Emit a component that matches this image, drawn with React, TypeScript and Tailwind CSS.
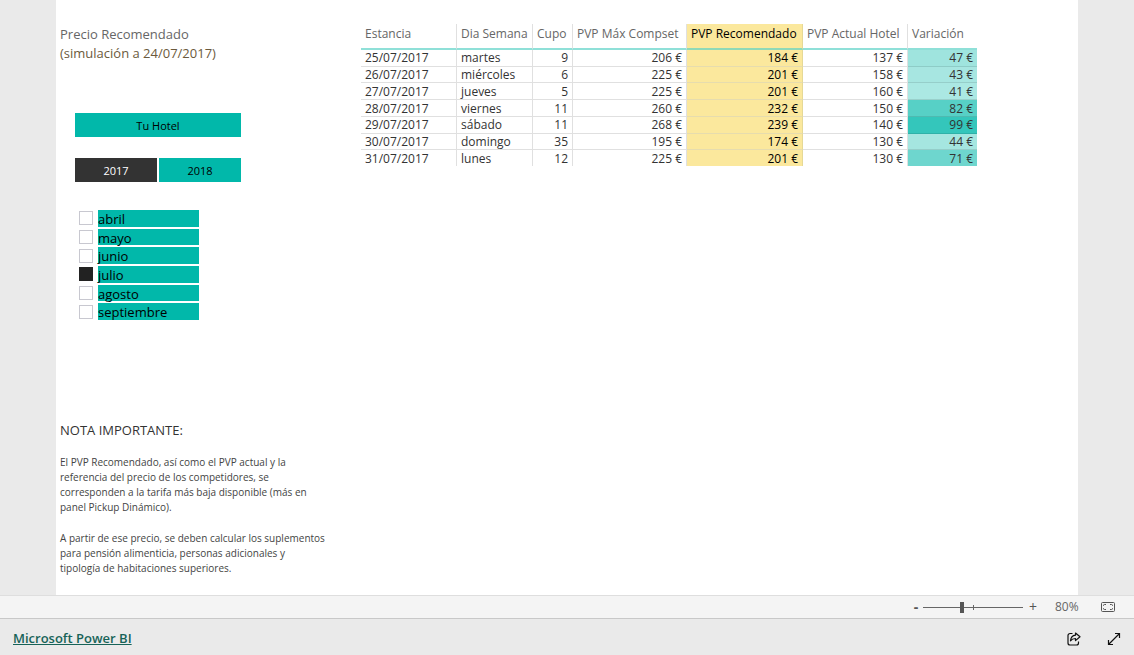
import { useState } from "react";

type Row = {
  date: string;
  day: string;
  quota: number;
  max: number;
  recommended: number;
  current: number;
  diff: number;
  tone: string;
};

const rows: Row[] = [
  { date: "25/07/2017", day: "martes", quota: 9, max: 206, recommended: 184, current: 137, diff: 47, tone: "bg-[#9fe4de]" },
  { date: "26/07/2017", day: "miércoles", quota: 6, max: 225, recommended: 201, current: 158, diff: 43, tone: "bg-[#a7e6e1]" },
  { date: "27/07/2017", day: "jueves", quota: 5, max: 225, recommended: 201, current: 160, diff: 41, tone: "bg-[#abe8e3]" },
  { date: "28/07/2017", day: "viernes", quota: 11, max: 260, recommended: 232, current: 150, diff: 82, tone: "bg-[#57d0c6]" },
  { date: "29/07/2017", day: "sábado", quota: 11, max: 268, recommended: 239, current: 140, diff: 99, tone: "bg-[#34c6bb]" },
  { date: "30/07/2017", day: "domingo", quota: 35, max: 195, recommended: 174, current: 130, diff: 44, tone: "bg-[#a5e6e0]" },
  { date: "31/07/2017", day: "lunes", quota: 12, max: 225, recommended: 201, current: 130, diff: 71, tone: "bg-[#6ed6ce]" },
];

const months = ["abril", "mayo", "junio", "julio", "agosto", "septiembre"];
const years = ["2017", "2018"];

function PriceTable() {
  const cell = "border-b border-[#e0e0e0] px-1 py-0 group-last:border-b-0";
  const divided = cell + " border-r";
  const head = "border-b-2 border-b-[#8fe0d8] px-1 pt-0 pb-[6px] font-normal text-[#666666]";
  const headDivided = head + " border-r border-r-[#e0e0e0]";
  return (
    <table className="h-[142px] w-[616px] table-fixed border-separate border-spacing-0 text-xs leading-[15px] whitespace-nowrap text-[#333333]">
      <colgroup>
        <col className="w-24" />
        <col className="w-[76px]" />
        <col className="w-10" />
        <col className="w-[114px]" />
        <col className="w-[116px]" />
        <col className="w-[105px]" />
        <col className="w-[69px]" />
      </colgroup>
      <thead>
        <tr className="h-[26px] text-left">
          <th className={headDivided}>Estancia</th>
          <th className={headDivided}>Dia Semana</th>
          <th className={headDivided}>Cupo</th>
          <th className={headDivided}>PVP Máx Compset</th>
          <th className="border-r border-b-2 border-r-[#e6d996] border-b-[#8fd9b8] bg-[#fbe89d] px-1 pt-0 pb-[6px] font-normal text-black">
            PVP Recomendado
          </th>
          <th className={headDivided}>PVP Actual Hotel</th>
          <th className={head}>Variación</th>
        </tr>
      </thead>
      <tbody>
        {rows.map((r) => (
          <tr key={r.date} className="group">
            <td className={divided}>{r.date}</td>
            <td className={divided}>{r.day}</td>
            <td className={divided + " text-right"}>{r.quota}</td>
            <td className={divided + " text-right"}>{r.max} €</td>
            <td className="border-r border-b border-r-[#e6d996] border-b-[#e6dcae] bg-[#fbe89d] px-1 py-0 text-right text-black group-last:border-b-0">
              {r.recommended} €
            </td>
            <td className={divided + " text-right"}>{r.current} €</td>
            <td className={"border-b border-black/10 px-1 py-0 text-right group-last:border-b-0 " + r.tone}>
              {r.diff} €
            </td>
          </tr>
        ))}
      </tbody>
    </table>
  );
}

function Filters() {
  const [year, setYear] = useState("2017");
  const [selected, setSelected] = useState<string[]>(["julio"]);
  const toggle = (m: string) =>
    setSelected((s) => (s.includes(m) ? s.filter((x) => x !== m) : [...s, m]));
  return (
    <div className="ml-[15px] w-[166px]">
      <button type="button" className="mt-[50px] h-6 w-full bg-[#01b8aa] pt-[2px] text-[11px] text-black">
        Tu Hotel
      </button>
      <div className="mt-[21px] grid grid-cols-2 gap-[2px]">
        {years.map((y) => (
          <button
            key={y}
            type="button"
            aria-pressed={year === y}
            onClick={() => setYear(y)}
            className={
              year === y
                ? "h-6 bg-[#333333] pt-[2px] text-[11px] text-white"
                : "h-6 bg-[#01b8aa] pt-[2px] text-[11px] text-black"
            }
          >
            {y}
          </button>
        ))}
      </div>
      <div className="mt-7 ml-1 grid h-[110px] w-[120px] grid-rows-6 gap-[2px]">
        {months.map((m) => (
          <label key={m} className="flex min-h-0 items-center gap-[5px] text-[13px] leading-[18px] text-black">
            <input
              type="checkbox"
              checked={selected.includes(m)}
              onChange={() => toggle(m)}
              className="size-[14px] shrink-0 appearance-none border border-[#c8c8d0] bg-white checked:border-[#222222] checked:bg-[#222222]"
            />
            <span className="h-full grow bg-[#01b8aa]">{m}</span>
          </label>
        ))}
      </div>
    </div>
  );
}

function ZoomBar() {
  const [zoom, setZoom] = useState(80);
  return (
    <div className="flex h-6 items-center justify-end border-y border-t-[#dedede] border-b-[#c8c8c8] bg-[#f4f4f4] pr-[19px] text-[#555555]">
      <button type="button" aria-label="Alejar" onClick={() => setZoom(zoom - 10)} className="w-3 text-sm leading-5 font-bold">
        -
      </button>
      <div className="relative flex h-5 w-[102px] items-center">
        <span className="absolute left-[51px] h-[5px] w-px bg-[#666666]" />
        <input
          type="range"
          aria-label="Zoom"
          min={10}
          max={190}
          value={zoom}
          onChange={(e) => setZoom(Number(e.target.value))}
          className="mx-px h-5 w-[100px] appearance-none bg-[linear-gradient(#666666,#666666)] bg-[length:100%_1px] bg-center bg-no-repeat [&::-webkit-slider-thumb]:h-[11px] [&::-webkit-slider-thumb]:w-1 [&::-webkit-slider-thumb]:appearance-none [&::-webkit-slider-thumb]:bg-[#555555]"
        />
      </div>
      <button type="button" aria-label="Acercar" onClick={() => setZoom(zoom + 10)} className="ml-[3px] w-3 text-sm leading-5">
        +
      </button>
      <span className="ml-4 w-8 text-xs leading-5 text-[#666666]">{zoom}%</span>
      <button type="button" aria-label="Ajustar a la página" className="ml-[14px]">
        <svg width="14" height="10" viewBox="0 0 14 10" fill="none" stroke="#555555">
          <rect x="0.5" y="0.5" width="13" height="9" rx="1" />
          <path d="M5 2.5H3.5a1 1 0 0 0-1 1V4M2.5 6v.5a1 1 0 0 0 1 1H5M9 2.5h1.5a1 1 0 0 1 1 1V4M11.5 6v.5a1 1 0 0 1-1 1H9" />
        </svg>
      </button>
    </div>
  );
}

export default function App() {
  return (
    <div className="flex min-h-screen flex-col bg-[#eaeaea] font-['Open_Sans','Noto_Sans',sans-serif]">
      <main className="flex grow px-14">
        <div className="flex grow bg-white">
          <section className="w-[305px] shrink-0 pt-[25px] pl-1">
            <h1 className="text-[13px] leading-[19px] text-[#666666]">
              Precio Recomendado
              <br />
              <span className="text-[#6b5a3c]">(simulación a 24/07/2017)</span>
            </h1>
            <Filters />
            <div className="mt-[100px] w-[280px] text-[#333333]">
              <h2 className="text-[13px] leading-5">NOTA IMPORTANTE:</h2>
              <p className="mt-[15px] text-[10px] leading-[15px] text-[#444444]">
                El PVP Recomendado, así como el PVP actual y la
                <br />
                referencia del precio de los competidores, se
                <br />
                corresponden a la tarifa más baja disponible (más en
                <br />
                panel Pickup Dinámico).
              </p>
              <p className="mt-4 text-[10px] leading-[15px] text-[#444444]">
                A partir de ese precio, se deben calcular los suplementos
                <br />
                para pensión alimenticia, personas adicionales y
                <br />
                tipología de habitaciones superiores.
              </p>
            </div>
          </section>
          <section className="pt-6">
            <PriceTable />
          </section>
        </div>
      </main>
      <ZoomBar />
      <footer className="flex h-9 items-center justify-between pt-1 pr-[13px] pl-[13px]">
        <a href="#" className="text-[13px] font-semibold text-[#176358] underline">
          Microsoft Power BI
        </a>
        <div className="flex items-center gap-[26px]">
          <button type="button" aria-label="Compartir">
            <svg width="14" height="14" viewBox="0 0 14 14" fill="none" stroke="#111111" strokeWidth="1.2" strokeLinejoin="round">
              <path d="M5.500 1.500h-2.500a2 2 0 0 0-2 2v7.500a2 2 0 0 0 2 2h6.500a2 2 0 0 0 2-2V9.500" />
              <path d="M8.500 1 13 4.800 8.500 8.600V6.500C6.300 6.500 4.700 7.100 3.500 8.800c.3-3 2-5.300 5-5.600z" />
            </svg>
          </button>
          <button type="button" aria-label="Pantalla completa">
            <svg width="14" height="14" viewBox="0 0 14 14" fill="none" stroke="#111111" strokeWidth="1.2">
              <path d="M8 1.500h4.500V6M12.500 1.500l-11 11M1.500 8v4.500H6" />
            </svg>
          </button>
        </div>
      </footer>
    </div>
  );
}
